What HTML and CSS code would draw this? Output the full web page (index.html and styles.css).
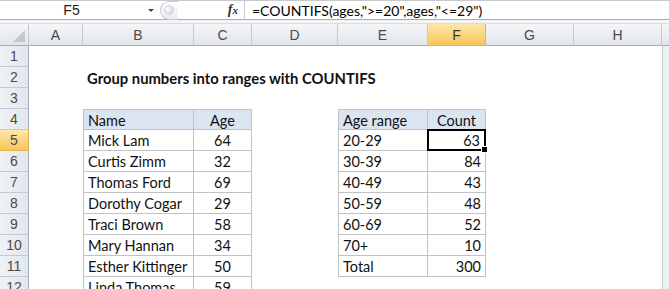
FILE: index.html
```html
<!DOCTYPE html>
<html>
<head>
<meta charset="utf-8">
<link rel="stylesheet" href="styles.css">
</head>
<body>
<div class="app">
  <div class="fbar">
    <div class="namebox"><span class="nb-text">F5</span><span class="nb-arrow"></span></div>
    <div class="fmid">
      <div class="pill"><span class="knob"></span></div>
      <span class="fx">f<span class="fx-x">x</span></span>
    </div>
    <div class="finput">=COUNTIFS(ages,"&gt;=20",ages,"&lt;=29")</div>
  </div>
  <div class="strip"></div>
  <div class="sheet">
    <div class="hd corner"><span class="tri"></span></div>
    <div class="hd col">A</div>
    <div class="hd col">B</div>
    <div class="hd col">C</div>
    <div class="hd col">D</div>
    <div class="hd col">E</div>
    <div class="hd col sel">F</div>
    <div class="hd col">G</div>
    <div class="hd col">H</div>
    <div class="hd col edge"></div>

    <!-- row 1 -->
    <div class="rh">1</div><div></div><div></div><div></div><div></div><div></div><div></div><div></div><div></div><div class="vs"></div>
    <!-- row 2 -->
    <div class="rh">2</div><div></div><div class="c title">Group numbers into ranges with COUNTIFS</div><div></div><div></div><div></div><div></div><div></div><div></div><div class="vs"></div>
    <!-- row 3 -->
    <div class="rh">3</div><div></div><div></div><div></div><div></div><div></div><div></div><div></div><div></div><div class="vs"></div>
    <!-- row 4 -->
    <div class="rh">4</div><div></div>
    <div class="c t th tl">Name</div><div class="c t th ctr">Age</div><div></div>
    <div class="c t th tl">Age range</div><div class="c t th ctr">Count</div><div></div><div></div><div class="vs"></div>
    <!-- row 5 -->
    <div class="rh sel">5</div><div></div>
    <div class="c t tl">Mick Lam</div><div class="c t ctr">64</div><div></div>
    <div class="c t tl">20-29</div><div class="c t rt active">63<span class="handle"></span></div><div></div><div></div><div class="vs"></div>
    <!-- row 6 -->
    <div class="rh">6</div><div></div>
    <div class="c t tl">Curtis Zimm</div><div class="c t ctr">32</div><div></div>
    <div class="c t tl">30-39</div><div class="c t rt">84</div><div></div><div></div><div class="vs"></div>
    <!-- row 7 -->
    <div class="rh">7</div><div></div>
    <div class="c t tl">Thomas Ford</div><div class="c t ctr">69</div><div></div>
    <div class="c t tl">40-49</div><div class="c t rt">43</div><div></div><div></div><div class="vs"></div>
    <!-- row 8 -->
    <div class="rh">8</div><div></div>
    <div class="c t tl">Dorothy Cogar</div><div class="c t ctr">29</div><div></div>
    <div class="c t tl">50-59</div><div class="c t rt">48</div><div></div><div></div><div class="vs"></div>
    <!-- row 9 -->
    <div class="rh">9</div><div></div>
    <div class="c t tl">Traci Brown</div><div class="c t ctr">58</div><div></div>
    <div class="c t tl">60-69</div><div class="c t rt">52</div><div></div><div></div><div class="vs"></div>
    <!-- row 10 -->
    <div class="rh">10</div><div></div>
    <div class="c t tl">Mary Hannan</div><div class="c t ctr">34</div><div></div>
    <div class="c t tl">70+</div><div class="c t rt">10</div><div></div><div></div><div class="vs"></div>
    <!-- row 11 -->
    <div class="rh">11</div><div></div>
    <div class="c t tl">Esther Kittinger</div><div class="c t ctr">50</div><div></div>
    <div class="c t tl">Total</div><div class="c t rt">300</div><div></div><div></div><div class="vs"></div>
    <!-- row 12 -->
    <div class="rh">12</div><div></div>
    <div class="c t tl">Linda Thomas</div><div class="c t ctr">59</div><div></div>
    <div></div><div></div><div></div><div></div><div class="vs"></div>
  </div>
</div>
</body>
</html>
```

FILE: styles.css
```css
html, body {
  margin: 0;
  padding: 0;
  background: #ffffff;
}
.app {
  width: 669px;
  height: 289px;
  overflow: hidden;
  font-family: "Lato", "Liberation Sans", sans-serif;
  color: #000;
}
.fbar {
  display: flex;
  height: 20px;
  border-top: 1px solid #c6c9cd;
  border-bottom: 1px solid #a5abb3;
  background: #ffffff;
  box-sizing: border-box;
}
.namebox {
  width: 160px;
  display: flex;
  align-items: center;
  font-family: "Liberation Sans", sans-serif;
  font-size: 14px;
  color: #1e1e1e;
}
.nb-text {
  width: 143px;
  text-align: center;
}
.nb-arrow {
  width: 0;
  height: 0;
  border-left: 3px solid transparent;
  border-right: 3px solid transparent;
  border-top: 3px solid #444;
  margin-left: 5px;
}
.fmid {
  width: 85px;
  display: flex;
  align-items: center;
  justify-content: space-between;
  border-right: 1px solid #c9ccd1;
  box-sizing: border-box;
  padding-right: 6px;
}
.pill {
  width: 18px;
  height: 19px;
  border: 1px solid #c9ccd1;
  border-right: none;
  border-radius: 10px 0 0 10px;
  background: linear-gradient(#ffffff, #e9ebee);
  box-sizing: border-box;
  display: flex;
  align-items: center;
  padding-left: 3px;
}
.knob {
  width: 8px;
  height: 8px;
  border-radius: 50%;
  background: radial-gradient(circle at 35% 35%, #ffffff, #c7cbd1);
  border: 1px solid #d3d6da;
}
.fx {
  font-family: "Liberation Serif", serif;
  font-style: italic;
  font-weight: bold;
  font-size: 14px;
  color: #333;
}
.fx-x {
  font-size: 11px;
}
.finput {
  flex: 1;
  display: flex;
  align-items: center;
  padding-left: 7px;
  font-size: 14px;
  color: #000;
}
.strip {
  height: 3px;
  background: #f3f4f6;
  border-bottom: 1px solid #d9dce0;
}
.sheet {
  display: grid;
  grid-template-columns: 29px 54px 111px 58px 86px 90px 58px 88px 88px 7px;
  grid-template-rows: 22px;
  grid-auto-rows: 21px;
}
.hd {
  background: linear-gradient(#f4f6f9, #e1e5ea);
  border-right: 1px solid #c5cad2;
  border-bottom: 1px solid #9faebf;
  box-sizing: border-box;
  display: flex;
  align-items: center;
  justify-content: center;
  font-family: "Liberation Sans", sans-serif;
  font-size: 14px;
  color: #4a4a4a;
}
.corner {
  justify-content: flex-end;
  align-items: flex-end;
  padding: 0 3px 3px 0;
}
.tri {
  width: 0;
  height: 0;
  border-left: 12px solid transparent;
  border-bottom: 12px solid #c3c8ce;
}
.hd.sel {
  background: linear-gradient(#fde7a9, #f7c65a);
  border-right: 1px solid #e2b34a;
  border-bottom: 1px solid #e2b34a;
  color: #333;
}
.edge {
  border-right: none;
}
.rh {
  background: linear-gradient(90deg, #eef1f5, #e3e7ec);
  border-right: 1px solid #9faebf;
  border-bottom: 1px solid #c5cad2;
  box-sizing: border-box;
  display: flex;
  align-items: center;
  justify-content: center;
  font-family: "Liberation Sans", sans-serif;
  font-size: 14px;
  color: #4a4a4a;
}
.rh.sel {
  background: linear-gradient(#fde7a9, #f7c65a);
  border-bottom: 1px solid #e2b34a;
  border-right: 1px solid #e2b34a;
}
.vs {
  background: #f0f1f3;
  border-left: 1px solid #c6c9cd;
  box-sizing: border-box;
}
.c {
  display: flex;
  align-items: center;
  font-size: 14.5px;
  white-space: nowrap;
  box-sizing: border-box;
  padding: 1px 4px 0 4px;
  color: #111;
}
.title {
  font-weight: bold;
  overflow: visible;
  font-size: 14.8px;
}
.t {
  border-right: 1px solid #c2c2c2;
  border-bottom: 1px solid #c2c2c2;
}
.tl {
  border-left: 1px solid #c2c2c2;
}
.th {
  background: #dbe5f1;
  border-top: 1px solid #c2c2c2;
}
.ctr {
  justify-content: center;
}
.rt {
  justify-content: flex-end;
}
.active {
  position: relative;
  border: 2px solid #000;
  margin: -1px 0 0 -1px;
  width: calc(100% + 1px);
  height: 22px;
}
.handle {
  position: absolute;
  right: -4px;
  bottom: -4px;
  width: 5px;
  height: 5px;
  background: #000;
  border: 1px solid #fff;
}
```
